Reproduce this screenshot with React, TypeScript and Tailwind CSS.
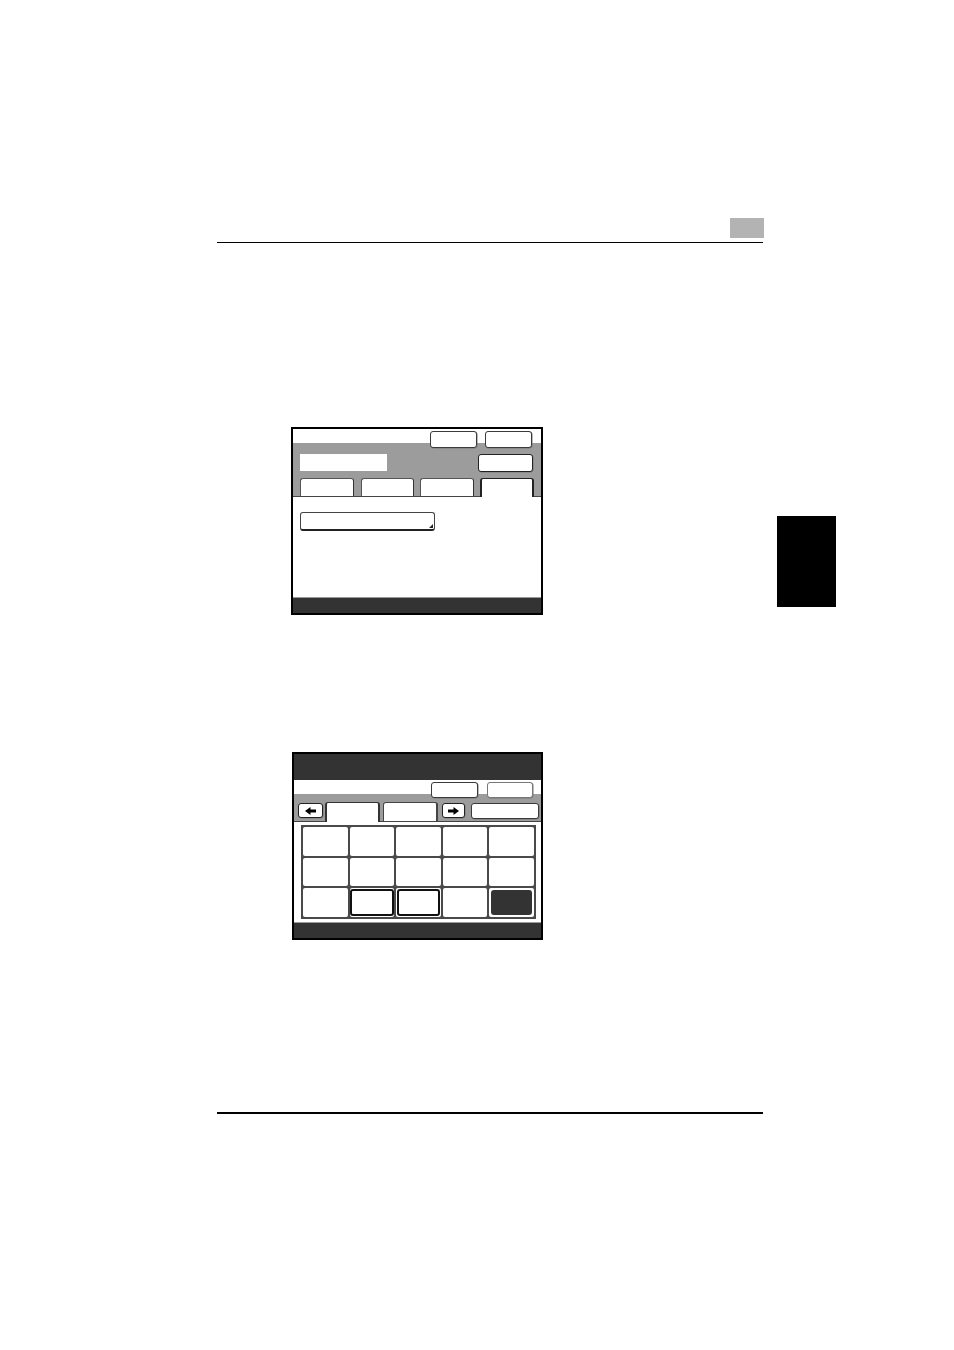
import React from "react";

function ArrowIcon({ dir }: { dir: "left" | "right" }) {
  return (
    <svg width="11" height="8" viewBox="0 0 11 8" className={dir === "right" ? "" : "-scale-x-100"}>
      <path d="M0 2.5H5.5V0L11 4L5.5 8V5.5H0Z" fill="#000" />
    </svg>
  );
}

const btn = "bg-white border border-[#3a3a3a] rounded-[3px] shadow-[0.5px_0.5px_0_#777]";

function Screen1() {
  return (
    <div className="w-[252px] h-[188px] border-2 border-black flex flex-col bg-white">
      <div className="h-[68px] flex flex-col border-b border-[#444] bg-[linear-gradient(to_bottom,#ffffff_14px,#9c9c9c_14px)]">
        <div className="flex justify-end gap-[8px] pr-[9px] pt-[2px]">
          <div className={`w-[47px] h-[17px] ${btn}`} />
          <div className={`w-[47px] h-[17px] ${btn}`} />
        </div>
        <div className="flex justify-between items-start pl-[7px] pr-[8px] mt-[6px]">
          <div className="w-[87px] h-[17px] bg-white" />
          <div className={`w-[55px] h-[18px] ${btn} border-[#222]`} />
        </div>
        <div className="flex items-end pl-[7px] mt-[6px] h-[18px]">
          <div className="w-[54px] h-[18px] bg-white border-t border-l border-r border-[#555] border-r-[#333] rounded-t-[3px]" />
          <div className="w-[53px] h-[18px] ml-[7px] bg-white border-t border-l border-r border-[#555] border-r-[#333] rounded-t-[3px]" />
          <div className="w-[54px] h-[18px] ml-[6px] bg-white border-t border-l border-r border-[#555] border-r-[#333] rounded-t-[3px]" />
          <div className="w-[54px] h-[19px] -mb-px ml-[6px] bg-white border-t border-l-2 border-r-2 border-[#222] rounded-t-[3px] relative" />
        </div>
      </div>
      <div className="h-[100px] bg-white pl-[7px] pt-[15px]">
        <div className="relative w-[135px] h-[19px] bg-white border border-[#444] border-b-2 border-b-[#222] rounded-[3px]">
          <svg width="4" height="4" viewBox="0 0 4 4" className="absolute right-[1px] bottom-[1px]">
            <path d="M4 0V4H0Z" fill="#222" />
          </svg>
        </div>
      </div>
      <div className="h-px bg-[#9a9a9a]" />
      <div className="h-[15px] bg-[#333333]" />
    </div>
  );
}

function Cell({ kind }: { kind?: "bold" | "dark" }) {
  if (kind === "bold") {
    return (
      <div className="bg-white rounded-[2px] p-[0.5px]">
        <div className="w-full h-full border-2 border-[#111] rounded-[3px]" />
      </div>
    );
  }
  if (kind === "dark") {
    return (
      <div className="bg-white rounded-[2px] p-[2px]">
        <div className="w-full h-full bg-[#333333] rounded-[3px]" />
      </div>
    );
  }
  return <div className="bg-white rounded-[2px]" />;
}

function Screen2() {
  const cells: (undefined | "bold" | "dark")[] = [
    undefined, undefined, undefined, undefined, undefined,
    undefined, undefined, undefined, undefined, undefined,
    undefined, "bold", "bold", undefined, "dark",
  ];
  return (
    <div className="w-[251px] h-[188px] border-2 border-black flex flex-col bg-white">
      <div className="h-[26px] bg-[#333333]" />
      <div className="h-[42px] flex flex-col border-b border-[#444] bg-[linear-gradient(to_bottom,#ffffff_14px,#9c9c9c_14px)]">
        <div className="flex justify-end gap-[9px] pr-[8px] pt-[2px]">
          <div className={`w-[47px] h-[16px] ${btn}`} />
          <div className={`w-[46px] h-[16px] ${btn} border-[#777]`} />
        </div>
        <div className="flex items-start pl-[4px] mt-[4px] h-[19px]">
          <div className={`w-[25px] h-[15px] mt-px ${btn} border-[#222] flex items-center justify-center`}>
            <ArrowIcon dir="left" />
          </div>
          <div className="w-[55px] h-[20px] ml-[2px] bg-white border-t border-l-2 border-r-2 border-[#333] rounded-t-[3px] relative" />
          <div className="w-[55px] h-[19px] ml-[3px] bg-white border-t border-l border-r-2 border-[#444] rounded-t-[3px]" />
          <div className={`w-[23px] h-[15px] mt-px ml-[4px] ${btn} border-[#222] flex items-center justify-center`}>
            <ArrowIcon dir="right" />
          </div>
          <div className={`w-[68px] h-[16px] mt-px ml-[6px] ${btn}`} />
        </div>
      </div>
      <div className="h-[100px] bg-white pl-[7px] pt-[3px]">
        <div className="w-[235px] h-[94px] bg-[#4a4a4a] p-[2px] grid grid-cols-5 grid-rows-3 gap-[2px]">
          {cells.map((k, i) => (
            <Cell key={i} kind={k} />
          ))}
        </div>
      </div>
      <div className="h-px bg-[#9a9a9a]" />
      <div className="h-[15px] bg-[#333333]" />
    </div>
  );
}

export default function App() {
  return (
    <div className="w-[954px] h-[1350px] bg-white font-['Liberation_Sans',Arial,sans-serif] overflow-hidden">
      <div className="ml-[217px] w-[546px] pt-[218px]">
        <div className="flex justify-end">
          <div className="w-[34px] h-[20px] bg-[#b3b3b3] -mr-px" />
        </div>
        <div className="mt-[3.5px] h-[1.5px] bg-black" />
      </div>
      <div className="flex items-start mt-[184px]">
        <div className="ml-[291px] flex flex-col">
          <Screen1 />
          <div className="mt-[137px] ml-px">
            <Screen2 />
          </div>
        </div>
        <div className="ml-[234px] mt-[89px] w-[59px] h-[91px] bg-black" />
      </div>
      <div className="ml-[217px] w-[546px] mt-[172px] h-[1.5px] bg-black" />
    </div>
  );
}
